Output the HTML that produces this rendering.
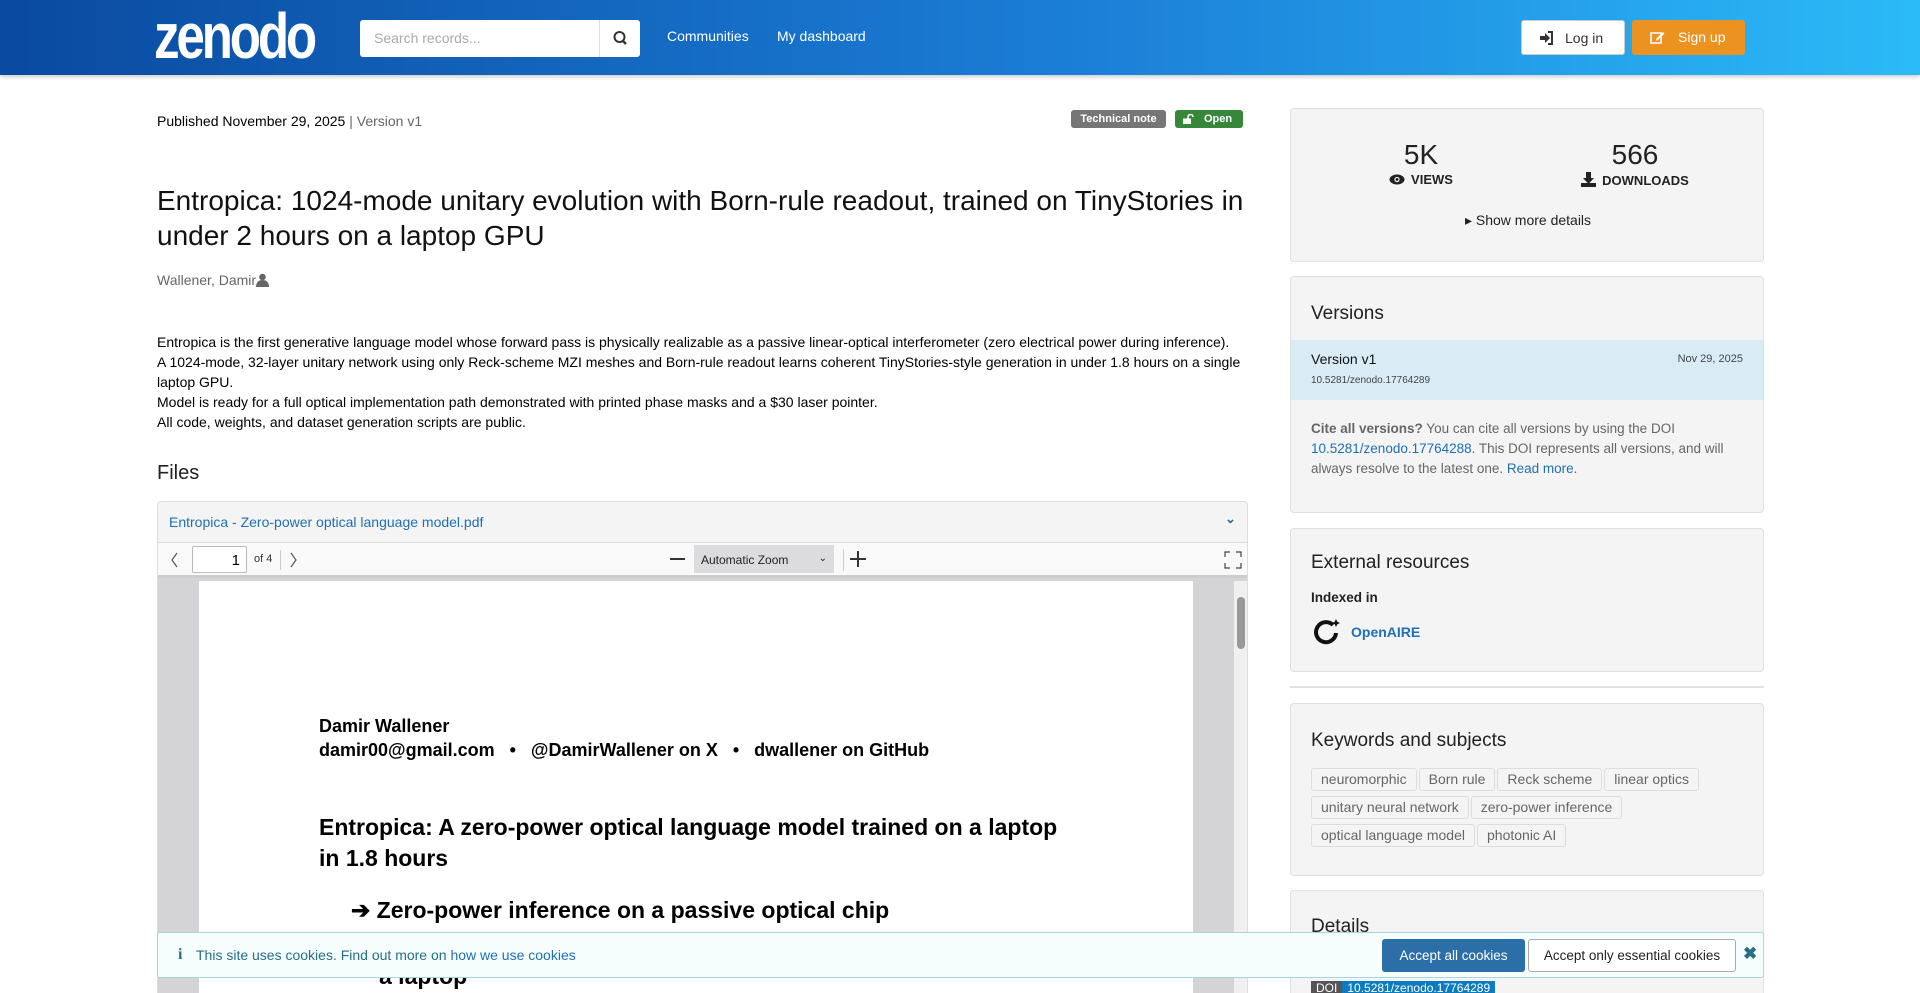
<!DOCTYPE html>
<html><head><meta charset="utf-8">
<style>
*{box-sizing:border-box;margin:0;padding:0}
html,body{width:1920px;height:993px;overflow:hidden}
body{background:#fff;font-family:"Liberation Sans",Arial,sans-serif;color:#000;position:relative}
.a{position:absolute}
#hdr{left:0;top:0;width:1920px;height:75px;background:linear-gradient(90deg,#0a4aa0 0%,#1b7dd6 55%,#2bbaf8 100%);box-shadow:0 2px 4px rgba(0,0,0,.2)}
.logo{left:154px;top:4px;font-size:64px;font-weight:bold;color:#fff;letter-spacing:-4px;line-height:64px;transform:scaleX(0.8);transform-origin:left top}
.search{left:360px;top:20px;width:280px;height:37px;background:#fff;border-radius:3px}
.search span{position:absolute;left:14px;top:10px;font-size:14px;color:#aaa}
.search .btn{position:absolute;right:0;top:0;width:41px;height:37px;border-left:1px solid #ddd}
.nav{top:28px;font-size:14px;color:#fff}
.btnw{left:1521px;top:20px;width:104px;height:35px;background:#fff;border:1px solid #ccc;border-radius:3px;font-size:14px;color:#333}
.btno{left:1632px;top:20px;width:113px;height:35px;background:#ec9220;border-radius:3px;font-size:14px;color:#fff}
.card{background:#f4f4f4;border:1px solid #e0e0e0;border-radius:4px}
.tag{display:inline-block;border:1px solid #ddd;border-radius:3px;padding:2px 9px;font-size:14px;color:#666;line-height:17px;margin:0 2px 5px 0;background:#f4f4f4}
h3{font-weight:normal;font-size:19px;color:#222}
.badge{top:110px;height:18px;border-radius:3px;color:#fff;font-size:11px;font-weight:bold;line-height:18px;text-align:center}
</style></head><body>
<div id="hdr" class="a">
 <div class="a logo">zenodo</div>
 <div class="a search"><span>Search records...</span><div class="btn"><svg width="41" height="37"><circle cx="19.5" cy="17" r="5" fill="none" stroke="#333" stroke-width="2"/><line x1="23" y1="21" x2="26" y2="24" stroke="#333" stroke-width="2.5"/></svg></div></div>
 <div class="a nav" style="left:667px">Communities</div>
 <div class="a nav" style="left:777px">My dashboard</div>
 <div class="a btnw"><svg class="a" style="left:18px;top:10px" width="14" height="14"><path d="M0 5h5V2l5 5-5 5V9H0z" fill="#333"/><path d="M8 1h4v12H8" fill="none" stroke="#333" stroke-width="2"/></svg><span class="a" style="left:43px;top:9px">Log in</span></div>
 <div class="a btno"><svg class="a" style="left:18px;top:10px" width="15" height="15"><rect x="1" y="3" width="10" height="10" fill="none" stroke="#fff" stroke-width="1.5"/><path d="M6 9l7-7 1.5 1.5-7 7H6z" fill="#fff"/></svg><span class="a" style="left:46px;top:9px">Sign up</span></div>
</div>

<div class="a" style="left:157px;top:113px;font-size:14px">Published November 29, 2025 <span style="color:#666">| Version v1</span></div>
<div class="a badge" style="left:1071px;width:95px;background:#767676">Technical note</div>
<div class="a badge" style="left:1175px;width:68px;background:#37873b"><svg class="a" style="left:8px;top:4px" width="12" height="10"><rect x="0" y="4.5" width="8" height="5.5" fill="#fff"/><path d="M5 5V3a2.5 2.5 0 015 0" fill="none" stroke="#fff" stroke-width="1.6"/></svg><span style="margin-left:18px">Open</span></div>

<div class="a" style="left:157px;top:183px;width:1100px;font-size:28px;line-height:35px;color:#111">Entropica: 1024-mode unitary evolution with Born-rule readout, trained on TinyStories in under 2 hours on a laptop GPU</div>
<div class="a" style="left:157px;top:272px;font-size:14px;color:#666">Wallener, Damir<svg width="13" height="14" style="vertical-align:-2px"><circle cx="6.5" cy="4" r="3.3" fill="#666"/><path d="M0 14c0-5 3-7 6.5-7s6.5 2 6.5 7z" fill="#666"/></svg></div>

<div class="a" style="left:157px;top:332px;width:1095px;font-size:14px;line-height:20px;color:#000">Entropica is the first generative language model whose forward pass is physically realizable as a passive linear-optical interferometer (zero electrical power during inference).<br>A 1024-mode, 32-layer unitary network using only Reck-scheme MZI meshes and Born-rule readout learns coherent TinyStories-style generation in under 1.8 hours on a single laptop GPU.<br>Model is ready for a full optical implementation path demonstrated with printed phase masks and a $30 laser pointer.<br>All code, weights, and dataset generation scripts are public.</div>

<div class="a" style="left:157px;top:462px;font-size:20px;color:#222">Files</div>
<div class="a" style="left:157px;top:501px;width:1091px;height:500px;border:1px solid #ddd;border-radius:4px;overflow:hidden;background:#d4d4d7">
 <div class="a" style="left:0;top:0;width:1091px;height:41px;background:#f4f4f4;border-bottom:1px solid #ddd"><span class="a" style="left:11px;top:12px;font-size:14px;color:#1f6fb5">Entropica - Zero-power optical language model.pdf</span><span class="a" style="left:1067px;top:9px;font-size:13px;color:#1f6fb5;font-weight:bold">&#8964;</span></div>
 <div class="a" style="left:0;top:41px;width:1091px;height:35px;background:#f9f9fa;border-bottom:3px solid #ccc">
  <svg class="a" style="left:12px;top:8px" width="10" height="18"><path d="M7 2L2 9l5 7" fill="none" stroke="#555" stroke-width="1.2"/></svg>
  <div class="a" style="left:34px;top:3px;width:55px;height:27px;background:#fff;border:1px solid #bbb;border-radius:2px;text-align:right;padding:5px 6px;font-size:15px">1</div>
  <span class="a" style="left:96px;top:10px;font-size:11px;color:#333">of 4</span>
  <div class="a" style="left:122px;top:7px;width:1px;height:20px;background:#ccc"></div>
  <svg class="a" style="left:130px;top:8px" width="10" height="18"><path d="M3 2l5 7-5 7" fill="none" stroke="#555" stroke-width="1.2"/></svg>
  <div class="a" style="left:512px;top:15px;width:15px;height:2px;background:#333"></div>
  <div class="a" style="left:536px;top:2px;width:140px;height:28px;background:#dcdcde;font-size:12px;color:#222;padding:8px 7px">Automatic Zoom<span style="float:right;font-size:10px">&#8964;</span></div>
  <div class="a" style="left:685px;top:6px;width:1px;height:22px;background:#ccc"></div>
  <div class="a" style="left:692px;top:15px;width:16px;height:2px;background:#333"></div><div class="a" style="left:699px;top:8px;width:2px;height:16px;background:#333"></div>
  <svg class="a" style="left:1066px;top:8px" width="18" height="18"><path d="M1 6V1h5M12 1h5v5M17 12v5h-5M6 17H1v-5" fill="none" stroke="#444" stroke-width="1.2"/></svg>
 </div>
 <div class="a" style="left:41px;top:79px;width:994px;height:430px;background:#fff">
  <div class="a" style="left:120px;top:133px;font-size:18px;font-weight:bold;line-height:24px">Damir Wallener<br>damir00@gmail.com &nbsp;&nbsp;•&nbsp;&nbsp; @DamirWallener on X &nbsp;&nbsp;•&nbsp;&nbsp; dwallener on GitHub</div>
  <div class="a" style="left:120px;top:231px;font-size:23px;font-weight:bold;line-height:31px">Entropica: A zero-power optical language model trained on a laptop<br>in 1.8 hours</div>
  <div class="a" style="left:152px;top:316px;font-size:23px;font-weight:bold">➔ Zero-power inference on a passive optical chip</div>
  <div class="a" style="left:180px;top:382px;font-size:23px;font-weight:bold">a laptop</div>
 </div>
 <div class="a" style="left:1076px;top:79px;width:14px;height:430px;background:#f0f0f0"></div>
 <div class="a" style="left:1079px;top:95px;width:8px;height:52px;background:#999;border-radius:4px"></div>
</div>

<div class="a card" style="left:1290px;top:108px;width:474px;height:154px">
 <div class="a" style="left:60px;top:30px;width:140px;text-align:center;font-size:28px;color:#222">5K</div>
 <div class="a" style="left:60px;top:63px;width:140px;text-align:center;font-size:13px;font-weight:bold;color:#222"><svg width="16" height="11" style="vertical-align:-1px;margin-right:6px"><ellipse cx="8" cy="5.5" rx="7.5" ry="5" fill="#222"/><circle cx="8" cy="5.5" r="2.6" fill="#fff"/><circle cx="8" cy="5.5" r="1.5" fill="#222"/></svg>VIEWS</div>
 <div class="a" style="left:274px;top:30px;width:140px;text-align:center;font-size:28px;color:#222">566</div>
 <div class="a" style="left:264px;top:63px;width:160px;text-align:center;font-size:13px;font-weight:bold;color:#222"><svg width="15" height="15" style="vertical-align:-2px;margin-right:6px"><path d="M5 0h5v6h3l-5.5 6L2 6h3z" fill="#222"/><rect x="0" y="11" width="15" height="4" fill="#222"/></svg>DOWNLOADS</div>
 <div class="a" style="left:0;top:103px;width:474px;text-align:center;font-size:14px;color:#222">&#9656; Show more details</div>
</div>
<div class="a card" style="left:1290px;top:276px;width:474px;height:237px">
 <h3 class="a" style="left:20px;top:26px">Versions</h3>
 <div class="a" style="left:0;top:63px;width:472px;height:60px;background:#d9ecf6">
  <span class="a" style="left:20px;top:11px;font-size:14px;color:#111">Version v1</span>
  <span class="a" style="right:20px;top:13px;font-size:11px;color:#444">Nov 29, 2025</span>
  <span class="a" style="left:20px;top:35px;font-size:10px;color:#444">10.5281/zenodo.17764289</span>
 </div>
 <div class="a" style="left:20px;top:142px;width:440px;font-size:13.5px;line-height:20px;color:#666"><b>Cite all versions?</b> You can cite all versions by using the DOI <span style="color:#1f6fb5">10.5281/zenodo.17764288</span>. This DOI represents all versions, and will always resolve to the latest one. <span style="color:#1f6fb5">Read more</span>.</div>
</div>
<div class="a card" style="left:1290px;top:528px;width:474px;height:144px">
 <h3 class="a" style="left:20px;top:23px">External resources</h3>
 <div class="a" style="left:20px;top:61px;font-size:13.5px;font-weight:bold;color:#222">Indexed in</div>
 <svg class="a" style="left:22px;top:89px" width="28" height="28"><path d="M20 7A10 10 0 1 0 23 15" fill="none" stroke="#111" stroke-width="4"/><path d="M23 1l1.3 2.7L27 5l-2.7 1.3L23 9l-1.3-2.7L19 5l2.7-1.3z" fill="#111"/></svg>
 <div class="a" style="left:60px;top:95px;font-size:14px;font-weight:bold;color:#1f6fb5">OpenAIRE</div>
</div>
<div class="a" style="left:1290px;top:686px;width:474px;height:2px;background:#e2e2e2"></div>
<div class="a card" style="left:1290px;top:703px;width:474px;height:173px">
 <h3 class="a" style="left:20px;top:26px">Keywords and subjects</h3>
 <div class="a" style="left:20px;top:64px;width:440px;line-height:0"><span class="tag">neuromorphic</span><span class="tag">Born rule</span><span class="tag">Reck scheme</span><span class="tag">linear optics</span><br><span class="tag">unitary neural network</span><span class="tag">zero-power inference</span><br><span class="tag">optical language model</span><span class="tag">photonic AI</span></div>
</div>
<div class="a card" style="left:1290px;top:890px;width:474px;height:120px">
 <h3 class="a" style="left:20px;top:25px">Details</h3>
 <div class="a" style="left:20px;top:89px;height:16px;font-size:12px;line-height:16px"><span style="background:#555;color:#fff;padding:0 5px">DOI</span><span style="background:#0c7bc0;color:#fff;padding:0 5px">10.5281/zenodo.17764289</span></div>
</div>

<div class="a" style="left:157px;top:932px;width:1607px;height:46px;background:#f6fdfd;border:1px solid #a9d5de;border-radius:3px">
 <div class="a" style="left:20px;top:13px;font-size:16px;font-weight:bold;color:#276f86;font-family:'Liberation Serif',serif">i</div>
 <div class="a" style="left:38px;top:14px;font-size:14px;color:#276f86">This site uses cookies. Find out more on <span style="color:#1f6fb5">how we use cookies</span></div>
 <div class="a" style="left:1224px;top:6px;width:143px;height:33px;background:#2c6ea8;border-radius:3px;color:#fff;font-size:13.5px;text-align:center;line-height:33px">Accept all cookies</div>
 <div class="a" style="left:1370px;top:6px;width:208px;height:33px;background:#fff;border:1px solid #aaa;border-radius:3px;color:#222;font-size:13.5px;text-align:center;line-height:31px">Accept only essential cookies</div>
 <div class="a" style="left:1585px;top:11px;font-size:17px;font-weight:bold;color:#276f86">&#10006;</div>
</div>
</body></html>
